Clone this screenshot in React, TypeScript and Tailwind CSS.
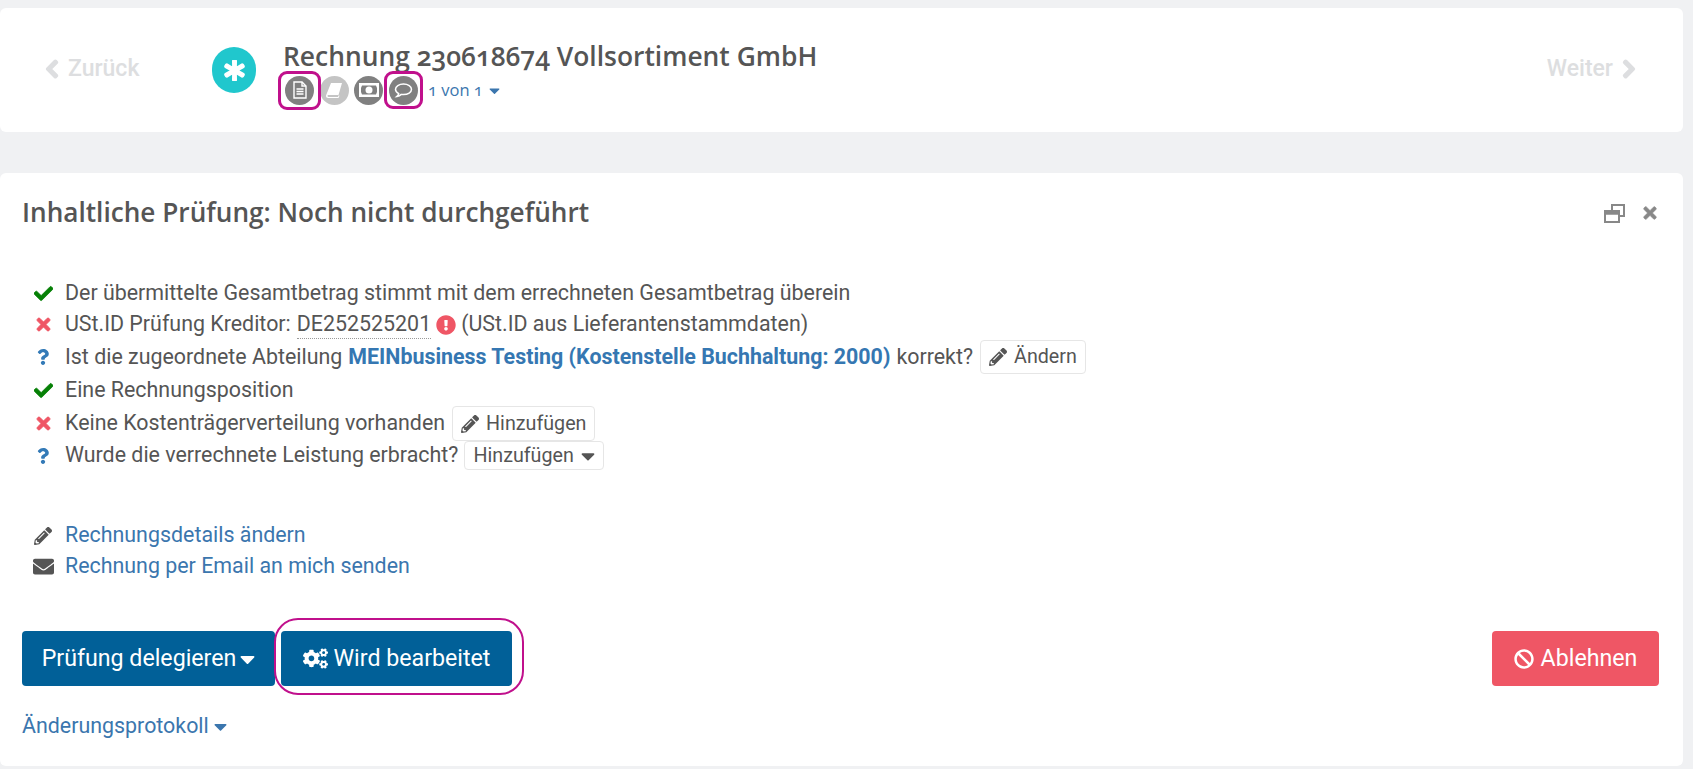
import { FaAsterisk, FaBan, FaCaretDown, FaCheck, FaChevronLeft, FaChevronRight, FaCogs, FaEnvelope, FaExclamationCircle, FaPencilAlt, FaQuestion, FaTimes } from 'react-icons/fa';
import type { ReactNode } from 'react';

const heading = 'font-["Open_Sans","Liberation_Sans",sans-serif]';

function IconCircle({ children, light }: { children: ReactNode; light?: boolean }) {
  return (
    <span className={`flex h-[29px] w-[29px] items-center justify-center rounded-full ${light ? 'bg-[#c4c4c4]' : 'bg-[#808080]'}`}>
      {children}
    </span>
  );
}

function Marked({ children, className }: { children: ReactNode; className: string }) {
  return (
    <span className="relative flex">
      {children}
      <span className={`absolute rounded-[9px] border-[3px] border-[#c0108c] ${className}`} />
    </span>
  );
}

function Row({ icon, children, className }: { icon: ReactNode; children: ReactNode; className: string }) {
  return (
    <div className={`flex items-center ${className}`}>
      <span className="flex w-[44px] shrink-0 justify-center">{icon}</span>
      <span className="flex items-center whitespace-nowrap">{children}</span>
    </div>
  );
}

const check = <FaCheck className="text-[19px] text-[#068006]" stroke="currentColor" strokeWidth={20} />;
const cross = <FaTimes className="text-[19px] text-[#ef5665]" stroke="currentColor" strokeWidth={25} />;
const question = <FaQuestion className="text-[16px] text-[#337ab7]" />;

export default function App() {
  return (
    <div className='h-[769px] w-[1693px] overflow-hidden bg-[#f0f1f3] pt-2 font-["Roboto",sans-serif] text-[21.4px] text-[#555555]'>
      <div className="flex h-[124px] w-[1683px] items-center rounded-md bg-white pr-[44px] pl-[42px]">
        <div className="mt-[-2px] flex w-[170px] items-center gap-[6px] text-[23px] font-medium text-[#dddee0]">
          <FaChevronLeft className="text-[20px]" stroke="currentColor" strokeWidth={50} />
          Zurück
        </div>
        <span className="flex h-[46px] w-[44px] items-center justify-center rounded-full bg-[#20c7cd] text-white">
          <FaAsterisk className="text-[21px]" stroke="currentColor" strokeWidth={35} />
        </span>
        <div className="mt-[3px] ml-[27px] flex flex-col">
          <h1 className={`${heading} text-[26.400px] leading-[34px] font-semibold text-[#555555] oldstyle-nums`}>Rechnung 230618674 Vollsortiment GmbH</h1>
          <div className="mt-[3px] ml-[2px] flex items-center gap-[5.500px]">
            <Marked className="-inset-x-[7px] -top-[5px] -bottom-[5px]">
              <IconCircle>
                <svg width="14" height="18" viewBox="0 0 14 18" fill="none" stroke="white" strokeWidth="1.4">
                  <path d="M1 1h8l4 4v12H1z" />
                  <path d="M9 1v4h4" />
                  <path d="M3.5 8h7M3.5 10.5h7M3.5 13h7" />
                </svg>
              </IconCircle>
            </Marked>
            <IconCircle light>
              <svg width="18" height="17" viewBox="0 0 18 17">
                <path fill="white" d="M6 1h11l-3.500 12H3.500c-.8 0-1 .6-1 1s.3.900 1 .900H13l.8-1.600.7.400-1 2.300H3.200C1.800 16 1 15 1 14c0-.5.100-.8.300-1.300z" />
              </svg>
            </IconCircle>
            <IconCircle>
              <svg width="20" height="14" viewBox="0 0 20 14">
                <path fill="white" d="M0 0h20v14H0zM3 2.500 2 5v4l1 2.500h14L18 9V5l-1-2.500z" fillRule="evenodd" />
                <circle cx="10" cy="7" r="3.500" fill="white" />
              </svg>
            </IconCircle>
            <Marked className="-inset-x-[5px] -top-[5px] -bottom-[4px]">
              <IconCircle>
                <svg width="19" height="17" viewBox="0 0 19 17" fill="none" stroke="white" strokeWidth="1.500">
                  <path d="M9.500 2C5 2 1.500 4.300 1.500 7.300c0 1.800 1.300 3.300 3.200 4.300-.2 1-.8 2-1.700 2.800 1.700-.3 3.200-1 4.300-2 .7.100 1.400.2 2.200.2 4.500 0 8-2.300 8-5.300S14 2 9.500 2z" />
                </svg>
              </IconCircle>
            </Marked>
            <span className={`${heading} ml-[5px] flex items-center gap-[6px] text-[16.500px] text-[#3b76ae] oldstyle-nums`}>
              1 von 1
              <FaCaretDown className="w-[11px] text-[17px]" />
            </span>
          </div>
        </div>
        <div className="mt-[-2px] ml-auto flex items-center gap-[6px] text-[23px] font-medium text-[#dddee0]">
          Weiter
          <FaChevronRight className="text-[20px]" stroke="currentColor" strokeWidth={50} />
        </div>
      </div>

      <div className="mt-[41px] flex h-[593px] w-[1683px] flex-col rounded-md bg-white px-[22px]">
        <div className="mt-[22px] flex h-[36px] items-center">
          <h2 className={`${heading} text-[26.200px] font-semibold text-[#555555]`}>Inhaltliche Prüfung: Noch nicht durchgeführt</h2>
          <div className="mr-[2px] ml-auto flex items-center gap-[16px] text-[#888888]">
            <svg width="21" height="19" viewBox="0 0 21 19" fill="none" stroke="currentColor" strokeWidth="2">
              <path d="M8 6V1h12v11h-5" />
              <rect x="1" y="7" width="14" height="11" />
              <path d="M1 9h14" strokeWidth="3.500" />
            </svg>
            <FaTimes className="text-[18px]" stroke="currentColor" strokeWidth={25} />
          </div>
        </div>

        <div className="mt-[47px] -ml-[1px] flex flex-col">
          <Row icon={check} className="h-[31px]">Der übermittelte Gesamtbetrag stimmt mit dem errechneten Gesamtbetrag überein</Row>
          <Row icon={cross} className="h-[31px]">
            USt.ID Prüfung Kreditor:
            <span className="ml-[6px] border-b border-dotted border-[#999999] leading-[28px]">DE252525201</span>
            <FaExclamationCircle className="mx-[5px] text-[20px] text-[#ef5665]" />
            (USt.ID aus Lieferantenstammdaten)
          </Row>
          <Row icon={question} className="h-[34px]">
            Ist die zugeordnete Abteilung
            <span className="ml-[6px] font-bold text-[#3577b2]">MEINbusiness Testing (Kostenstelle Buchhaltung: 2000)</span>
            <span className="ml-[6px]">korrekt?</span>
            <span className="ml-[7px] flex h-[34px] items-center gap-[7px] rounded border border-[#e6e6e6] px-[8px] text-[19.700px]">
              <FaPencilAlt className="text-[18px]" />
              Ändern
            </span>
          </Row>
          <Row icon={check} className="mt-[1px] h-[31px]">Eine Rechnungsposition</Row>
          <Row icon={cross} className="h-[35px]">
            Keine Kostenträgerverteilung vorhanden
            <span className="ml-[7px] flex h-[35px] items-center gap-[7px] rounded border border-[#e6e6e6] px-[8px] text-[19.700px]">
              <FaPencilAlt className="text-[18px]" />
              Hinzufügen
            </span>
          </Row>
          <Row icon={question} className="h-[29px]">
            Wurde die verrechnete Leistung erbracht?
            <span className="ml-[6px] flex h-[29px] items-center gap-[7px] rounded border border-[#e6e6e6] px-[8px] text-[19.700px]">
              Hinzufügen
              <FaCaretDown className="w-[14px] text-[22px]" />
            </span>
          </Row>
        </div>

        <div className="mt-[50px] -ml-[1px] flex flex-col">
          <Row icon={<FaPencilAlt className="text-[18px]" />} className="h-[31px] text-[#3b76ae] [&>span:first-child]:text-[#555555]">Rechnungsdetails ändern</Row>
          <Row icon={<FaEnvelope className="text-[21px]" />} className="h-[31px] text-[#3b76ae] [&>span:first-child]:text-[#555555]">Rechnung per Email an mich senden</Row>
        </div>

        <div className="mt-[49px] flex items-start text-[23.200px] text-white">
          <button className="flex h-[55px] w-[253px] items-center justify-center gap-[4px] rounded bg-[#016098]">
            Prüfung delegieren
            <FaCaretDown className="w-[15px] text-[24px]" />
          </button>
          <span className="relative ml-[6px] flex">
            <button className="flex h-[55px] w-[231px] items-center justify-center gap-[6px] rounded bg-[#016098]">
              <FaCogs className="text-[25px]" />
              Wird bearbeitet
            </button>
            <span className="absolute -top-[13px] -right-[12px] -bottom-[9px] -left-[7px] rounded-[24px] border-[2.500px] border-[#c0108c]" />
          </span>
          <button className="mr-[2px] ml-auto flex h-[55px] w-[167px] items-center justify-center gap-[7px] rounded bg-[#ef5665]">
            <FaBan className="text-[20px]" />
            Ablehnen
          </button>
        </div>

        <div className="mt-[24px] flex items-center gap-[5px] text-[#3b76ae]">
          Änderungsprotokoll
          <FaCaretDown className="w-[13px] text-[21px]" />
        </div>
      </div>
    </div>
  );
}
